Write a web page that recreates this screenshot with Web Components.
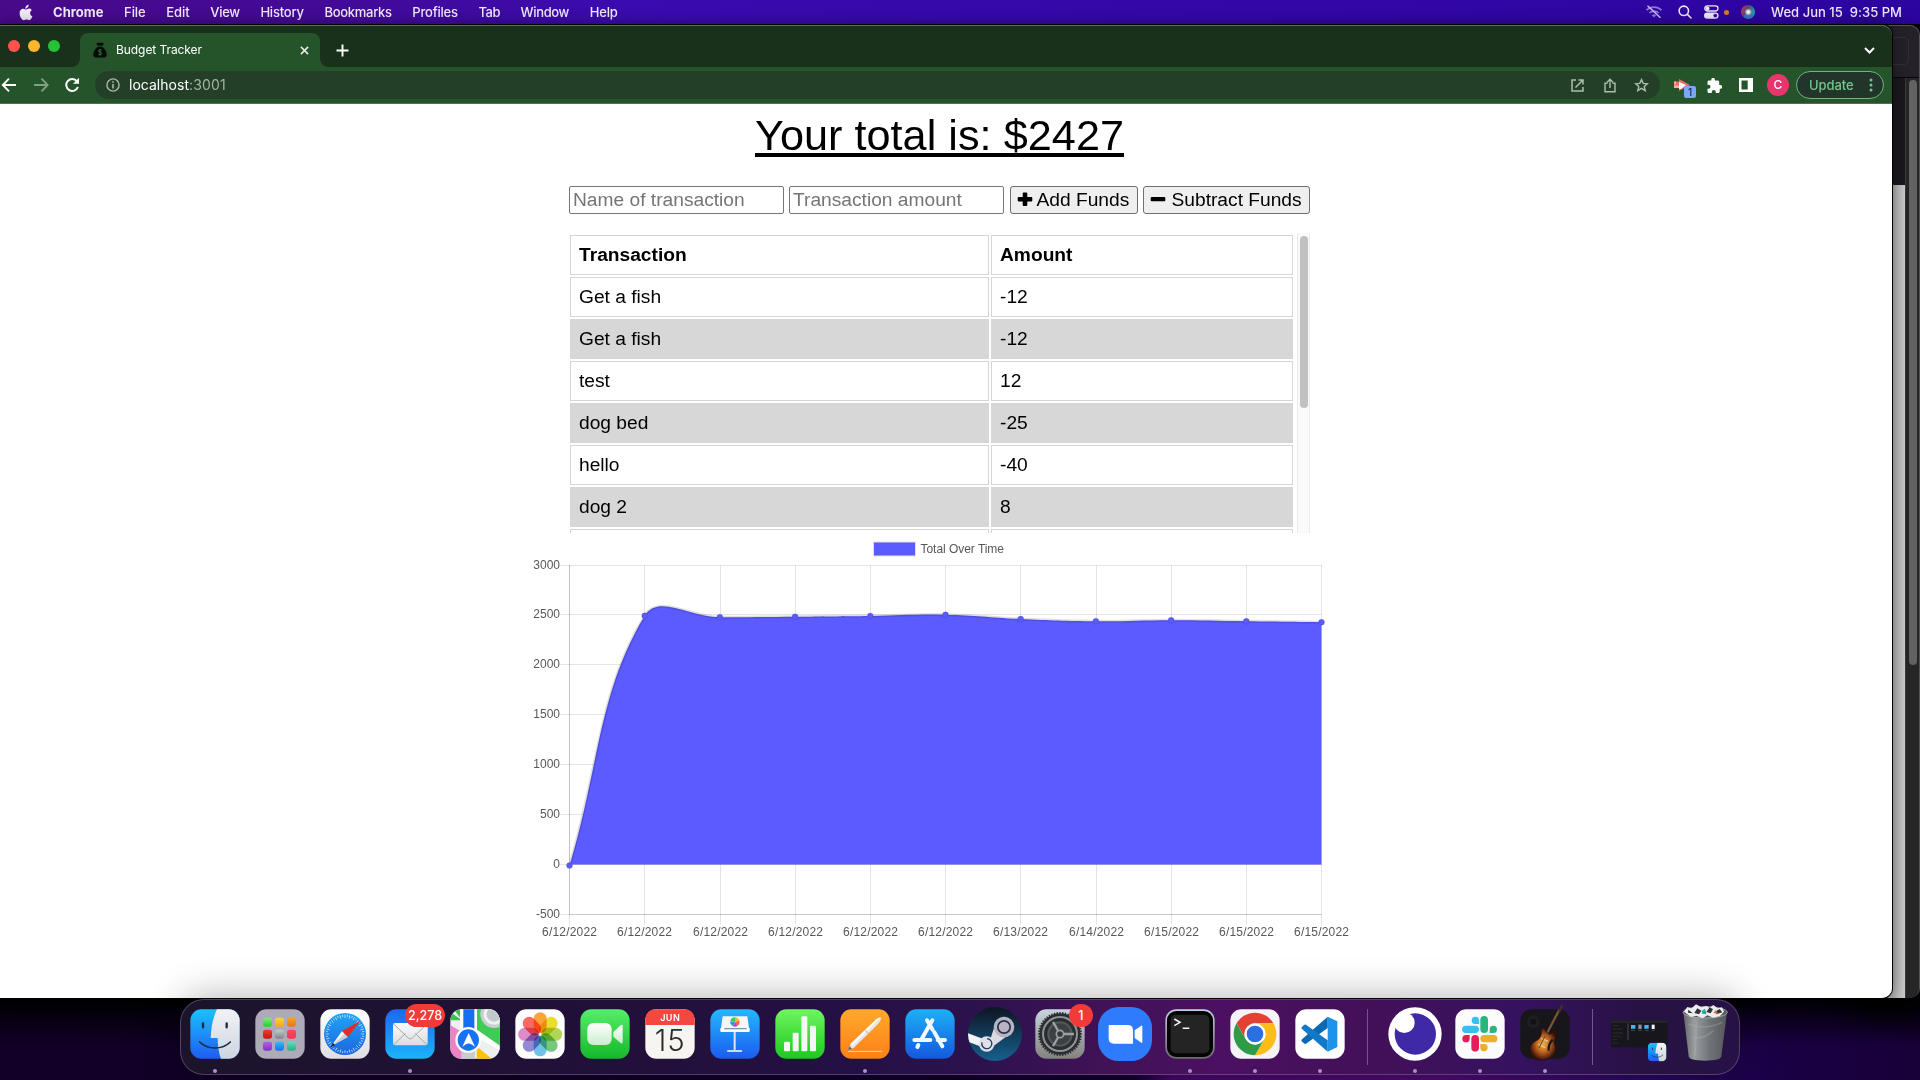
<!DOCTYPE html>
<html lang="en">
<head>
<meta charset="utf-8">
<title>Budget Tracker</title>
<style>
html,body{margin:0;padding:0;width:1920px;height:1080px;overflow:hidden;background:#0b0020}
</style>
</head>
<body>
<mac-desktop></mac-desktop>
<script>
function define(name, html, init) {
  customElements.define(name, class extends HTMLElement {
    constructor() {
      super();
      this.attachShadow({ mode: 'open' }).innerHTML = html;
    }
    connectedCallback() { if (init) init.call(this, this.shadowRoot); }
  });
}

/* Inline label whose tracking is adjusted so that it spans w pixels. */
define('fit-text', `<style>:host{display:inline-block;white-space:pre;flex:none}</style><slot></slot>`, function () {
  const w = parseFloat(this.getAttribute('w'));
  this.style.letterSpacing = '0px';
  const n = this.textContent.length;
  const now = this.getBoundingClientRect().width;
  if (w && n) this.style.letterSpacing = ((w - now) / n) + 'px';
});

/* ---------- menu bar ---------- */
define('menu-bar', `<style>
:host{display:flex;height:24px;align-items:center;color:#f1ebfa;font:500 13px Inter,sans-serif;background:linear-gradient(90deg,#490a8a 0,#420a98 18%,#3a0bb0 33%,#3408a8 60%,#2c04a0 100%);position:relative}
nav{display:flex;flex:1;align-items:center;padding-left:19px}
svg{display:block;flex:none}
b{font-weight:700}
fit-text{margin-top:-1px}
.apple{margin-right:20px}
nav fit-text{margin-right:20.6px}
aside{display:flex;align-items:center;padding-right:18px}
</style>
<nav>
<svg class="apple" width="14" height="17" viewBox="0 0 14 17"><path fill="#f1ebfa" d="M9.6.8c.1 1.200-.4 2.100-1 2.800-.6.700-1.500 1.200-2.300 1.100-.1-1.100.4-2.100 1-2.700C7.900 1.300 8.900.8 9.600.8zM12.800 6.200c-1.100.7-1.800 1.700-1.700 3 .1 1.500.9 2.600 2.300 3.100-.5 1.500-1.700 3.900-3.200 3.900-1 0-1.400-.6-2.600-.6s-1.700.6-2.600.6C3 16.200.6 12.600.6 9.200.6 6.400 2.300 4.700 4.200 4.700c1.200 0 2.100.8 2.900.8.800 0 1.900-.9 3.300-.9 1 0 1.900.6 2.400 1.600z"/></svg>
<fit-text w="50.500"><b>Chrome</b></fit-text><fit-text w="21.500">File</fit-text><fit-text w="23.500">Edit</fit-text><fit-text w="29.500">View</fit-text><fit-text w="43.500">History</fit-text><fit-text w="67.300">Bookmarks</fit-text><fit-text w="45.500">Profiles</fit-text><fit-text w="21.500">Tab</fit-text><fit-text w="48.500">Window</fit-text><fit-text w="28">Help</fit-text>
</nav>
<aside>
<svg width="18" height="14" viewBox="0 0 18 14" style="margin-right:15px"><g fill="none" stroke="#8f75d2" stroke-width="1.700"><path d="M1.500 5.200a10.600 10.600 0 0 1 15 0M4.300 8a6.800 6.800 0 0 1 9.400 0"/></g><path d="M6.700 10.300a3.300 3.300 0 0 1 4.600 0L9 12.600z" fill="#8f75d2"/><path d="M2.500.8l13 12" stroke="#cfc2f0" stroke-width="1.400"/></svg>
<svg width="14" height="14" viewBox="0 0 14 14" style="margin-right:12.500px"><g fill="none" stroke="#eee8fb" stroke-width="1.600" stroke-linecap="round"><circle cx="5.800" cy="5.800" r="4.700"/><path d="M9.400 9.400l3.600 3.600"/></g></svg>
<svg width="15" height="14" viewBox="0 0 15 14" style="margin-right:5px"><rect x=".8" y=".8" width="13.200" height="5.200" rx="2.600" fill="none" stroke="#eee8fb" stroke-width="1.300"/><circle cx="3.600" cy="3.400" r="1.900" fill="#eee8fb"/><rect y="7.400" width="14.600" height="6.400" rx="3.200" fill="#eee8fb"/><circle cx="11.300" cy="10.600" r="1.900" fill="#3510a5"/></svg>
<svg width="5" height="5" viewBox="0 0 5 5" style="margin-right:12px"><circle cx="2.500" cy="2.500" r="2.500" fill="#dc7a26"/></svg>
<svg width="14" height="14" viewBox="0 0 14 14" style="margin-right:16px"><defs><radialGradient id="sg"><stop offset="0" stop-color="#fff"/><stop offset=".35" stop-color="#fff" stop-opacity=".85"/><stop offset="1" stop-color="#fff" stop-opacity="0"/></radialGradient><linearGradient id="sl" x2="1" y2=".4"><stop offset="0" stop-color="#d33b77"/><stop offset=".45" stop-color="#5c4169"/><stop offset="1" stop-color="#1fa5a0"/></linearGradient></defs><circle cx="7" cy="7" r="7" fill="url(#sl)"/><path d="M2 11a7 7 0 0 0 11-1c-4-1-7-2-11 1z" fill="#3f6fd0"/><circle cx="7.200" cy="7" r="3.800" fill="url(#sg)"/></svg>
<fit-text w="131">Wed Jun 15  9:35 PM</fit-text>
</aside>`);

/* ---------- browser chrome ---------- */
define('tab-strip', `<style>
:host{display:flex;height:42px;background:#19311a;box-shadow:inset 0 1px #5c6e5d;border-radius:0 10px 0 0;align-items:center;color:#fff;font:400 12px Inter,sans-serif}
.lights{display:flex;gap:8px;width:80px;padding-left:8px;box-sizing:border-box}
.lights i{width:12px;height:12px;border-radius:50%}
.tab{align-self:flex-end;width:240px;height:34px;box-sizing:border-box;background:#26542a;border-radius:8px 8px 0 0;display:flex;align-items:center;padding:0 11px 0 13px;position:relative}
.tab:before,.tab:after{content:"";position:absolute;bottom:0;width:8px;height:8px}
.tab:before{left:-8px;background:radial-gradient(circle at 0 0,transparent 7.500px,#26542a 8px)}
.tab:after{right:-8px;background:radial-gradient(circle at 100% 0,transparent 7.500px,#26542a 8px)}
svg{display:block;flex:none}
.sp{flex:1}
</style>
<div class="lights"><i style="background:#ff544d"></i><i style="background:#ffb42a"></i><i style="background:#25c138"></i></div>
<div class="tab">
<svg width="14" height="16" viewBox="0 0 14 16" style="margin-right:9px;margin-top:-1px"><path d="M3.200 1.600L4.800 1 5.600.5 7 1l1.400-.5L10 1l1 .6-1.600 2.200H4.800zM4.700 4.700h4.700C12 7 13.700 10 13.700 12.500c0 2-1 3-2.700 3H3c-1.700 0-2.700-1-2.700-3C.3 10 2 7 4.700 4.700z" fill="#060b06"/><path d="M8.700 8.300C8.200 7.500 5.500 7.500 5.500 9c0 1.500 3.200.8 3.200 2.500 0 1.500-2.700 1.500-3.400.6M7 7v6.700" fill="none" stroke="#2c7a35" stroke-width=".9"/></svg>
<fit-text w="86" style="margin-top:-2px">Budget Tracker</fit-text><span class="sp"></span>
<svg width="9" height="9" viewBox="0 0 9 9"><path d="M.9.900l7.200 7.200M8.100.900L.9 8.100" stroke="#e8efe8" stroke-width="1.500"/></svg>
</div>
<svg width="13" height="13" viewBox="0 0 13 13" style="margin-left:16px;margin-top:8px"><path d="M6.500.5v12M.5 6.500h12" stroke="#fff" stroke-width="1.900"/></svg>
<span class="sp"></span>
<svg width="11" height="7" viewBox="0 0 11 7" style="margin:8px 17px 0 0"><path d="M1 1l4.500 4.500L10 1" fill="none" stroke="#fff" stroke-width="2"/></svg>`);

define('tool-bar', `<style>
:host{display:flex;height:37px;box-sizing:border-box;background:#26542a;border-bottom:1px solid #4c7350;align-items:center;font:400 14px Inter,sans-serif;padding-right:8px}
svg{display:block;flex:none}
.nav{display:flex;gap:16.500px;width:95px;box-sizing:border-box;padding-left:1px}
.omni{flex:1;height:28px;border-radius:14px;background:#233f27;display:flex;align-items:center;padding:0 11px 0 11px;color:#fff}
.omni fit-text{margin-top:-1px}
.omni .g{color:#a3b3a5;margin-right:auto}
.ext{display:flex;align-items:center;width:136px}
.badge{position:absolute;left:10px;top:7px;width:12px;height:12px;border-radius:2px;background:#7aa7f7;color:#1a2a40;font:500 10px/12px Inter,sans-serif;text-align:center}
.av{width:22px;height:22px;border-radius:50%;background:#e8356d;color:#fff;font:500 12px/22px Inter,sans-serif;text-align:center}
.up{width:88px;height:28px;border-radius:14px;box-sizing:border-box;border:1px solid #6db585;background:#23352a;color:#73c68c;display:flex;align-items:center;padding-left:12px;font:500 13px Inter,sans-serif}
</style>
<div class="nav">
<svg width="16" height="16" viewBox="0 0 16 16"><path d="M15 8H2M8 1.700L1.800 8 8 14.300" fill="none" stroke="#fff" stroke-width="1.900"/></svg>
<svg width="16" height="16" viewBox="0 0 16 16"><path d="M0 8h13M7.500 1.700L13.700 8l-6.200 6.300" fill="none" stroke="#82a085" stroke-width="1.800"/></svg>
<svg width="15" height="16" viewBox="0 0 15 16" style="margin-left:-1px"><path d="M11.900 4.100A6 6 0 1 0 12.900 10" fill="none" stroke="#fff" stroke-width="2"/><path d="M14 .8v6H8z" fill="#fff"/></svg>
</div>
<div class="omni">
<svg width="14" height="14" viewBox="0 0 14 14" style="margin-right:9px"><circle cx="7" cy="7" r="6.100" fill="none" stroke="#a9b8ac" stroke-width="1.400"/><path d="M7 6v4.500M7 3.300v1.500" stroke="#a9b8ac" stroke-width="1.600"/></svg>
<fit-text w="60">localhost</fit-text><fit-text class="g" w="37">:3001</fit-text>
<svg width="13" height="13" viewBox="0 0 13 13"><path d="M5 1H1v11h11V8M7.500 1H12v4.500M12 1L4.500 8.500" fill="none" stroke="#aebdb0" stroke-width="1.500"/></svg>
<svg width="12" height="15" viewBox="0 0 12 15" style="margin-left:20px"><path d="M3.500 5.200H1v8.600h10V5.200H8.500M6 10V1.500M3 4.300l3-3 3 3" fill="none" stroke="#aebdb0" stroke-width="1.400"/></svg>
<svg width="15" height="14" viewBox="0 0 15 14" style="margin-left:18px"><path d="M7.500 1.600l1.700 3.800 4.200.4-3.200 2.700 1 4.100-3.700-2.200-3.700 2.200 1-4.100L1.600 5.800l4.200-.4z" fill="none" stroke="#aebdb0" stroke-width="1.400"/></svg>
</div>
<div class="ext">
<div style="position:relative;width:16px;height:12px;margin-left:14px"><svg width="16" height="12" viewBox="0 0 16 12"><path d="M0 2.500h5V0l11 6-11 6V9H0z" fill="#ee6a66"/><path d="M0 2.500h2v3H0zM0 6.500h5v2.500H0z" fill="#ffaaa6"/><path d="M5 3l7 3-5 4H5z" fill="#fff"/></svg><span class="badge">1</span></div>
<svg width="15" height="15" viewBox="0 0 15 15" style="margin-left:16.500px"><path d="M12.600 7.100h-.9V4c0-.9-.6-1.500-1.500-1.500H7.400v-.8a1.800 1.800 0 0 0-3.600 0v.8H1.500C.7 2.500 0 3.200 0 4v2.800h1a2 2 0 0 1 0 4H0v2.700C0 14.400.6 15 1.500 15h2.800v-1a2 2 0 0 1 4 0v1h2.400c.9 0 1.500-.6 1.500-1.500v-2.800h.9a1.800 1.800 0 0 0-.5-3.600z" fill="#fff" transform="translate(.5)"/></svg>
<svg width="14" height="14" viewBox="0 0 14 14" style="margin-left:17.500px"><path fill-rule="evenodd" d="M0 0h14v14H0zM2.500 2.500v9H8.700v-9z" fill="#fff"/></svg>
<div class="av" style="margin-left:14px">C</div>
</div>
<div class="up"><fit-text w="44.500">Update</fit-text><svg width="4" height="14" viewBox="0 0 4 14" style="margin-left:15px"><g fill="#73c68c"><circle cx="2" cy="2" r="1.500"/><circle cx="2" cy="7" r="1.500"/><circle cx="2" cy="12" r="1.500"/></g></svg></div>`);

/* ---------- page ---------- */
define('fund-button', `<style>
:host{display:flex;box-sizing:border-box;height:28px;border:1px solid #6f6f6f;border-radius:3px;background:#efefef;align-items:center;padding-left:6px;font:19.200px "Liberation Sans",Arial,sans-serif;color:#000;white-space:nowrap}
svg{display:block;flex:none}</style>
<svg width="16" height="15" viewBox="0 0 16 15" style="margin-top:-1px"><path fill="#000"/></svg><slot></slot>`, function (r) {
  r.querySelector('path').setAttribute('d', this.hasAttribute('plus')
    ? 'M6.700.5h2.600q1 0 1 1V5h4q1 0 1 1v2.500q0 1-1 1h-4v3.600q0 1-1 1H6.700q-1 0-1-1V9.500H1.700q-1 0-1-1V6q0-1 1-1h4V1.500q0-1 1-1z'
    : 'M1.700 5h12.600q1 0 1 1v2.300q0 1-1 1H1.700q-1 0-1-1V6q0-1 1-1z');
});

define('txn-table', `<style>
:host{display:flex;width:740px;height:300px;overflow:hidden;font:19.200px "Liberation Sans",Arial,sans-serif;color:#000}
.rows{display:flex;flex-direction:column;gap:2px;width:723px;padding-top:2px;flex:none}
.r{display:grid;grid-template-columns:419px 302px;gap:2px;height:40px;flex:none}
.r div{box-sizing:border-box;border:1px solid #d6d6d6;padding-left:8px;line-height:38px}
.r.h{font-weight:bold}
.r.g div{background:#d7d7d7}
.track{margin-left:3.500px;width:13.500px;box-sizing:border-box;border:solid #ebebeb;border-width:0 1px;background:#fafafa;padding:3px 0 0 2.500px}
.thumb{width:8px;height:172px;border-radius:4px;background:#c1c1c1}
</style><div class="rows"></div><div class="track"><div class="thumb"></div></div>`, function (r) {
  const rows = [['Transaction', 'Amount'], ['Get a fish', '-12'], ['Get a fish', '-12'], ['test', '12'], ['dog bed', '-25'], ['hello', '-40'], ['dog 2', '8'], ['', '']];
  r.querySelector('.rows').innerHTML = rows.map((a, i) =>
    `<div class="r ${i ? (i % 2 ? '' : 'g') : 'h'}"><div>${a[0]}</div><div>${a[1]}</div></div>`).join('');
});

define('total-chart', `<style>:host{display:block;width:880px;height:430px}svg{display:block;font:12px "Liberation Sans",Arial,sans-serif}</style>
<svg width="880" height="430" viewBox="500 530 880 430"></svg>`, function (r) {
  const L = 569.500, R = 1321.500, T = 565, B = 914.500, Z = 864.400, k = 349.300 / 3500, dx = (R - L) / 10;
  const dates = ['12', '12', '12', '12', '12', '12', '13', '14', '15', '15', '15'];
  const v = [-12, 2492, 2476, 2482, 2490, 2502, 2459, 2436, 2447, 2437, 2427];
  const p = v.map((y, i) => ({ x: L + dx * i, y: Z - y * k }));
  let s = '';
  for (let i = 0; i < 8; i++) {
    const y = Math.floor(565 + i * 49.9) + .5;
    s += `<path d="M559.500 ${y}H${R}" stroke="#000" stroke-opacity=".1"/><text x="560" y="${y + 3.5}" text-anchor="end" fill="#585858">${3000 - i * 500}</text>`;
    if (i > 5) s += `<path d="M569.500 ${y}H${R}" stroke="#000" stroke-opacity=".12"/>`;
  }
  for (let i = 0; i < 11; i++) {
    const x = Math.floor(569.7 + 75.2 * i) + .5;
    s += `<path d="M${x} ${T}V924.500" stroke="#000" stroke-opacity=".1"/><text x="${x}" y="936" text-anchor="middle" textLength="55" fill="#585858">6/${dates[i]}/2022</text>`;
  }
  s += `<path d="M569.500 565V914.500" stroke="#000" stroke-opacity=".15"/>`;
  /* cubic spline with tension .4, control points kept inside the plot */
  const c = p.map((q, i) => {
    const a = p[i - 1] || q, n = p[i + 1] || q;
    const d0 = Math.hypot(q.x - a.x, q.y - a.y), d1 = Math.hypot(n.x - q.x, n.y - q.y);
    const f0 = .4 * d0 / (d0 + d1), f1 = .4 * d1 / (d0 + d1);
    const cl = y => Math.max(T, Math.min(B, y));
    return { px: q.x - f0 * (n.x - a.x), py: cl(q.y - f0 * (n.y - a.y)), nx: q.x + f1 * (n.x - a.x), ny: cl(q.y + f1 * (n.y - a.y)) };
  });
  let d = `M${p[0].x} ${p[0].y}`;
  for (let i = 1; i < 11; i++) d += `C${c[i - 1].nx} ${c[i - 1].ny} ${c[i].px} ${c[i].py} ${p[i].x} ${p[i].y}`;
  s += `<path d="${d}V${Z}H${L}Z" fill="#5b5bff"/><path d="${d}" fill="none" stroke="#000" stroke-opacity=".12" stroke-width="3"/>`;
  s += p.map(q => `<circle cx="${q.x}" cy="${q.y}" r="3" fill="#5b5bff" stroke="#000" stroke-opacity=".1"/>`).join('');
  s += `<rect x="874" y="542.500" width="41" height="13" fill="none" stroke="#000" stroke-opacity=".12" stroke-width="2"/><rect x="874" y="542.500" width="41" height="13" fill="#5b5bff"/><text x="920.500" y="552.500" textLength="83.500" fill="#585858">Total Over Time</text>`;
  r.querySelector('svg').innerHTML = s;
});

define('budget-page', `<style>
:host{display:flex;flex-direction:column;align-items:center;height:894px;background:#fff;padding-right:12px;box-sizing:border-box;color:#000;font-family:"Liberation Sans",Arial,sans-serif;border-radius:0 0 10px 0;overflow:hidden}
h1{margin:0 1px 0 0;font-weight:400;font-size:43.200px;height:82px;line-height:63px}
h1 fit-text{text-decoration:underline;text-decoration-thickness:4px;text-underline-offset:3px}
form{display:flex;width:742px;margin:0 0 19px}
input{box-sizing:border-box;width:215px;height:28px;margin:0 5px 0 0;border:1px solid #767676;border-radius:2px;padding:1px 3px;font:19.200px "Liberation Sans",Arial,sans-serif;background:#fff}
input::placeholder{color:#757575;opacity:1}
</style>
<h1><fit-text w="369">Your total is: $2427</fit-text></h1>
<form><input placeholder="Name of transaction"><input placeholder="Transaction amount" style="margin-right:6px"><fund-button plus style="width:128px;margin-right:5px"><span style="margin-left:3.500px">Add Funds</span></fund-button><fund-button style="width:167px"><span style="margin-left:5.500px">Subtract Funds</span></fund-button></form>
<txn-table></txn-table>
<total-chart style="margin-top:-3px"></total-chart>`);

define('chrome-window', `<style>:host{display:block;width:1892px;height:973px;border-radius:0 10px 10px 0;box-shadow:0 0 0 1px #000,0 0 16px rgba(0,0,0,.45)}</style>
<tab-strip></tab-strip><tool-bar></tool-bar><budget-page></budget-page>`);

define('back-window', `<style>
:host{display:flex;flex-direction:column;width:60px;height:973px;background:#242129;border-radius:0 10px 10px 0;overflow:hidden;box-shadow:0 0 0 1px #000,0 14px 22px 4px rgba(0,0,0,.8);border:solid #55525c;border-width:1px 1px 0 0;box-sizing:border-box}
.top{height:52px;border-bottom:1px solid #08070b;box-sizing:border-box}
.top i{display:block;margin:11px 10px 0 20px;height:28px;border:1px solid #322f38;border-radius:5px;box-sizing:border-box}
.body{display:flex;flex:1}
.c{width:45px;display:flex;flex-direction:column}
.c .d{height:107px;background:#1a171f}
.c .l{flex:1;background:linear-gradient(90deg,#aaa 32px,#b8b8b8 36px,#cbcbcb 45px)}
.s{width:14px;background:#262626;border-left:1px solid #3a3a3a;box-sizing:border-box;padding:2px 0 0 3px}
.s i{display:block;width:8px;height:585px;border-radius:4px;background:#626262}
</style><div class="top"><i></i></div><div class="body"><div class="c"><div class="d"></div><div class="l"></div></div><div class="s"><i></i></div></div>`);

/* ---------- dock ---------- */
define('dock-icon', `<style>
:host{display:block;width:50px;height:50px;flex:none;position:relative}
::slotted(svg){display:block;width:50px;height:50px;overflow:visible}
.dot{display:none;position:absolute;left:22.500px;top:59.500px;width:4px;height:4px;border-radius:50%;background:#ab8fc9}
:host([on]) .dot{display:block}
.b{position:absolute;box-sizing:border-box;left:20px;top:-5.500px;height:23.500px;min-width:23.500px;border-radius:12px;background:#f23b38;color:#fff;font:500 12.500px/23.500px Inter,sans-serif;text-align:center;padding:0 3px}
:host(:not([badge])) .b{display:none}
:host([one]) .b{left:34px}
</style><slot></slot><i class="dot"></i><span class="b"></span>`, function (r) { r.querySelector('.b').textContent = this.getAttribute('badge') || ''; });

const box = f => `<rect x="1" y="1" width="148" height="148" rx="33" fill="${f}"/>`;
const svg = s => `<svg viewBox="0 0 150 150">${s}</svg>`;
const grad = (id, a, b) => `<linearGradient id="${id}" x2="0" y2="1"><stop stop-color="${a}"/><stop offset="1" stop-color="${b}"/></linearGradient>`;
const face = p => `<defs>${grad(p + 'A', '#1ac2fd', '#1e5cf2')}${grad(p + 'B', '#f2f3f5', '#ccd5e0')}<clipPath id="${p}C"><rect x="1" y="1" width="148" height="148" rx="33"/></clipPath></defs><g clip-path="url(#${p}C)"><rect width="150" height="150" fill="url(#${p}A)"/><path d="M81 0C68 28 63 58 62 87h21c0 22 3 44 10 63h60V0z" fill="url(#${p}B)"/></g><path d="M39 43v12M110 43v12" stroke="#222a3c" stroke-width="7" stroke-linecap="round"/><path d="M29 99c24 24 68 24 92 0" fill="none" stroke="#222a3c" stroke-width="5" stroke-linecap="round"/>`;

const launch = [['#7ff07a', '#2cc92b'], ['#ffd23c', '#fba411'], ['#fba02b', '#ee7316'], ['#f43a33', '#c5160f'], ['#c3ced5', '#7e8488'], ['#ff4767', '#f4364f'], ['#b45ee8', '#8132c6'], ['#20c3fc', '#1f6ff0'], ['#5de0c2', '#20b282']].map((c, i) =>
  `<defs>${grad('l' + i, c[0], c[1])}</defs><rect x="${24 + i % 3 * 36}" y="${26 + (i / 3 | 0) * 36}" width="27" height="27" rx="7" fill="url(#l${i})"/>`).join('');

let ticks = '';
for (let i = 0; i < 48; i++) ticks += `<path d="M75 17v${i % 2 ? 6 : 10}" transform="rotate(${i * 7.5} 75 75)" stroke="#e9f5ff" stroke-width="2"/>`;
const petals = ['#fb9417', '#e8d80b', '#a3cf3b', '#5fbd6b', '#58b7e2', '#8277cd', '#d67ac0', '#fb5148'].map((c, i) =>
  `<rect x="56" y="10" width="39" height="62" rx="19.500" fill="${c}" opacity=".86" style="mix-blend-mode:multiply" transform="rotate(${i * 45} 75.500 76)"/>`).join('');
let teeth = '';
for (let i = 0; i < 48; i++) teeth += `<path d="M75 9v9" transform="rotate(${i * 7.5} 75 75)" stroke="#2a2c2e" stroke-width="4"/>`;

const icons = [
  ['on', svg(face('finder'))],
  ['', svg(box('#aeabb9') + launch)],
  ['', svg(`<defs>${grad('sa', '#20a5f4', '#1b66df')}${grad('sw', '#ffffff', '#dfdfe2')}</defs>` + box('url(#sw)') + `<circle cx="75" cy="75" r="63" fill="url(#sa)"/>${ticks}<path d="M121 36L66 66l17 18z" fill="#f4372f"/><path d="M34 111l32-45 17 18z" fill="#f2f4f7"/><path d="M66 66l17 18 38-48z" fill="#c9251f" opacity=".5"/><path d="M34 111l40-36 9 9z" fill="#c9ccd3"/><path d="M31 116l8-14 6 6z" fill="#14223a"/>`)],
  ['on badge="2,278"', svg(`<defs>${grad('ma', '#1e66f1', '#1ab4fb')}${grad('mb', '#fbfbfb', '#d9dcdf')}</defs>` + box('url(#ma)') + `<rect x="24" y="42" width="104" height="67" rx="7" fill="url(#mb)"/><path d="M26 45l44 42q6 5 12 0l44-42M27 106l35-33M125 106L90 73" fill="none" stroke="#a5a7aa" stroke-width="3"/>`)],
  ['', svg(`<defs><clipPath id="mc"><rect x="1" y="1" width="148" height="148" rx="33"/></clipPath></defs><g clip-path="url(#mc)"><rect width="150" height="150" fill="#eef0ef"/><path d="M0 8l36 26H0zM10 0h25v32z" fill="#38c351"/><path d="M75 0h75v112L75 62z" fill="#3fcb57"/><circle cx="132" cy="16" r="41" fill="#c9ced2"/><circle cx="132" cy="16" r="31" fill="#f0f1f2"/><circle cx="132" cy="16" r="22" fill="#c3c8cc"/><path d="M0 48l35 20v82H0z" fill="#eb83c4"/><path d="M30 0l10 0v58H30zM73 0h8v66h-8z" fill="#fff"/><rect x="40" width="33" height="66" fill="#1470f1"/><path d="M78 60l72 50v14L78 84z" fill="#fff"/><path d="M35 90h40v60H35z" fill="#c9cbcf"/><path d="M80 112l46 38H80z" fill="#fbc10d"/></g><circle cx="55" cy="93" r="39" fill="#f8fbff"/><circle cx="55" cy="93" r="32" fill="#1772f2"/><path d="M56 72l19 41q-10-8-19-10-9 2-19 10z" fill="#fff"/>`)],
  ['', svg(box('#fdfdfd') + `<g style="isolation:isolate">${petals}</g><circle cx="75.500" cy="76" r="3" fill="#fff"/>`)],
  ['', svg(`<defs>${grad('va', '#55ef69', '#15b82b')}${grad('vb', '#ffffff', '#c8efcd')}</defs>` + box('url(#va)') + `<rect x="22" y="42" width="73" height="66" rx="18" fill="url(#vb)"/><path d="M100 69l22-20q6-4 6 3v47q0 7-6 3l-22-19z" fill="url(#vb)"/>`)],
  ['', svg(box('#f7f5f1') + `<path d="M1 48V34Q1 1 34 1h82q33 0 33 33v14z" fill="#f4473f"/><text x="75" y="36" text-anchor="middle" textLength="59" font-family="Inter" font-weight="600" font-size="27" fill="#fff">JUN</text><text x="74" y="125" text-anchor="middle" textLength="90" font-family="Inter" font-weight="300" font-size="88" fill="#2b2b2b">15</text>`)],
  ['', svg(`<defs>${grad('ka', '#22b9fd', '#1b5bf0')}</defs>` + box('url(#ka)') + `<path d="M38 22h74l6 42H32z" fill="#f4f7fa"/><path d="M31 58h88v8q0 3-3 3H34q-3 0-3-3z" fill="#fff"/><path d="M44 57h66v4H41z" fill="#6f93b5"/><path d="M75 39V25a14 14 0 0 1 13 10z" fill="#fbb42c"/><path d="M75 39l13-4a14 14 0 0 1-5 15z" fill="#f4673e"/><path d="M75 39l8 11a14 14 0 0 1-15 1z" fill="#ae4bc0"/><path d="M75 39l-7 12a14 14 0 0 1-7-14z" fill="#2696e5"/><path d="M75 39l-14-3a14 14 0 0 1 14-11z" fill="#42c362"/><path d="M74 69v57" stroke="#dbe6f2" stroke-width="6"/><rect x="51" y="123" width="46" height="6" rx="3" fill="#c8daf1"/>`)],
  ['', svg(`<defs>${grad('na', '#6ef65f', '#1dc81f')}</defs>` + box('url(#na)') + `<g fill="#f3f8f3"><rect x="27" y="98" width="18" height="29" rx="3"/><rect x="53" y="71" width="18" height="56" rx="3"/><rect x="79" y="22" width="18" height="105" rx="3"/><rect x="105" y="50" width="18" height="77" rx="3"/></g>`)],
  ['on', svg(`<defs>${grad('pa', '#ffa92b', '#ff8018')}</defs>` + box('url(#pa)') + `<path d="M24 127h102" stroke="#ffd2a5" stroke-width="3"/><path d="M24 124l8-20L109 31q14-10 14-3 0 6-8 16L41 117z" fill="#e4e6e9"/><path d="M32 104L109 31q9-6 12-4L37 110z" fill="#fff"/><path d="M75 62l9 11M24 124l5-12 6 7z" stroke="#8d8f94" stroke-width="2" fill="#555"/>`)],
  ['', svg(`<defs>${grad('aa', '#1cb0f6', '#1458dd')}</defs>` + box('url(#aa)') + `<g stroke="#f3f8ff" stroke-width="12" stroke-linecap="round"><path d="M82 34L50 90M66 34l17 28M88 70l24 42M28 93h48M98 93h22M40 108l-3 6"/></g>`)],
  ['', svg(`<defs>${grad('ta', '#0d1522', '#17608f')}<clipPath id="tc"><circle cx="75" cy="75" r="81"/></clipPath></defs><circle cx="75" cy="75" r="81" fill="url(#ta)"/><g clip-path="url(#tc)"><path d="M-12 82L54 105 64 82 74 50 112 80 70 112Z" fill="#dcd9e3"/><path d="M-10 84l54 20" stroke="#f4f2f6" stroke-width="24"/><circle cx="50" cy="105" r="23" fill="#e2dfe8"/><path d="M36 100a15 15 0 1 0 15-11" fill="none" stroke="#173b61" stroke-width="4"/></g><circle cx="102" cy="54" r="31" fill="#b9b4c4"/><circle cx="102" cy="54" r="21" fill="#253148"/><circle cx="102" cy="54" r="16" fill="#b9b4c4"/>`)],
  ['one badge="1"', svg(`<defs>${grad('gs', '#c8d5dd', '#83827e')}</defs>` + box('url(#gs)') + `${teeth}<circle cx="75" cy="75" r="58" fill="#8f9495" stroke="#2b2d30" stroke-width="8"/><circle cx="75" cy="75" r="43" fill="#55595b" stroke="#2b2d30" stroke-width="10"/><circle cx="75" cy="75" r="32" fill="#3c4042"/><path d="M75 75h42M75 75L54 38.600M75 75l-21 36.400" stroke="#9ba0a2" stroke-width="7"/><circle cx="75" cy="75" r="11" fill="#353839" stroke="#9ba0a2" stroke-width="5"/>`)],
  ['', svg(`<rect x="-6" y="-6" width="162" height="162" rx="62" fill="#2e7cfd"/><path d="M26 48h57q16 0 16 16v40H42q-16 0-16-16z" fill="#fff"/><path d="M104 64l20-14q3-2 3 1v49q0 3-3 1l-20-14z" fill="#fff"/>`)],
  ['on', svg(`<defs>${grad('ra', '#c3d2dc', '#6d6b70')}</defs>` + box('url(#ra)') + `<rect x="6" y="6" width="138" height="138" rx="27" fill="#050505"/><rect x="17" y="17" width="116" height="116" rx="15" fill="#242424"/><path d="M28 30l17 10-17 10M53 58h20" fill="none" stroke="#f5f5f5" stroke-width="4.500"/>`)],
  ['on', svg(box('#f5f3f7') + `<circle cx="75" cy="75" r="64" fill="#fff"/><path d="M19.600 43A64 64 0 0 1 130.400 43H75A32 32 0 0 0 47.300 91z" fill="#e34133"/><path d="M130.400 43A64 64 0 0 1 75 139L102.700 91A32 32 0 0 0 75 43z" fill="#fdbd18"/><path d="M19.600 43A64 64 0 0 0 75 139L102.700 91A32 32 0 0 1 47.300 91z" fill="#2f9b49"/><circle cx="75" cy="75" r="31" fill="#fff"/><circle cx="75" cy="75" r="25" fill="#2b6fe3"/>`)],
  ['on', svg(box('#fff') + `<path d="M98 23L127 37V114L98 128z" fill="#1f93ea"/><path d="M98 23v34L33 104q-3 2-6-1l-6-5q-4-4 0-7z" fill="#0b68b2"/><path d="M98 128V94L33 47q-3-2-6 1l-6 5q-4 4 0 7z" fill="#107ac8"/>`)],
  ['|'],
  ['on', svg(`<circle cx="75" cy="75" r="80" fill="#fff"/><circle cx="76" cy="75" r="62" fill="#4029a6"/><circle cx="43" cy="41" r="31" fill="#fff"/>`)],
  ['on', svg(box('#fbfbfb') + `<g><rect x="76" y="21" width="23" height="51" rx="11.500" fill="#2bb57d"/><path d="M104 72V60a11 11 0 1 1 11 12z" fill="#2bb57d"/><rect x="76" y="78" width="51" height="22" rx="11" fill="#ecaf2c"/><path d="M76 105h12a11 11 0 1 1-12 11z" fill="#ecaf2c"/><rect x="49" y="78" width="23" height="50" rx="11.500" fill="#e01f5c"/><path d="M44 78v11a11 11 0 1 1-11-11z" fill="#e01f5c"/><rect x="21" y="50" width="51" height="22" rx="11" fill="#35c1ef"/><path d="M72 45H60a11 11 0 1 1 12-11z" fill="#35c1ef"/></g>`)],
  ['on', svg(`<defs><radialGradient id="gu"><stop offset="0" stop-color="#edb540"/><stop offset=".5" stop-color="#c0641f"/><stop offset="1" stop-color="#35100a"/></radialGradient></defs>` + box('#17161a') + `<circle cx="40" cy="38" r="19" fill="#1f1e22"/><circle cx="40" cy="38" r="9" fill="#131216"/><path d="M73 88L118 2" stroke="#7d5436" stroke-width="7"/><path d="M115 10l5-18 10-6-2 10-8 17z" fill="#3d2f28"/><path d="M64 68q0-13 8-12 5 12 14 19 8 3 14-9 6-10 9 0 5 16-6 27-3 5 2 15 9 28-16 40-28 12-48 0-19-16-10-36 5-12 20-18 13-8 13-26z" fill="url(#gu)" stroke="#24100a" stroke-width="2"/><path d="M64 88l20 9M55 106l21 10" stroke="#d9c9a4" stroke-width="4"/><path d="M98 92q-14 14-12 33" fill="none" stroke="#1f1513" stroke-width="7"/><path d="M75 81L57 117" stroke="#63432c" stroke-width="3"/>`)],
  ['|'],
  ['', svg(`<rect x="-12" y="34" width="170" height="81" fill="#17161d"/><path d="M-12 34h170v8H-12z" fill="#25232c"/><path d="M-8 50h20M-8 60h30M-8 72h32M-8 82h26M-8 92h14M-8 102h18" stroke="#25242b" stroke-width="4"/><path d="M39 43v50" stroke="#625f68" stroke-width="2"/><path d="M48 48h13v11H48zM88 48h13v11H88z" fill="#3bbcf2"/><path d="M70 47h10v13H70z" fill="#8497aa"/><path d="M110 47h9v13h-9z" fill="#f4f4f4"/><path d="M48 64h12M69 64h12M89 64h12M110 64h9" stroke="#625f68" stroke-width="2"/><g transform="translate(98 101) scale(.375)">${face('mini')}</g>`)],
  ['', svg(`<defs><linearGradient id="tr"><stop stop-color="#62666a"/><stop offset=".25" stop-color="#9a9da0"/><stop offset=".6" stop-color="#707377"/><stop offset="1" stop-color="#54575c"/></linearGradient></defs><path d="M10 10L26 142q2 13 49 13t49-13L141 10z" fill="url(#tr)"/><ellipse cx="75.500" cy="10" rx="66" ry="17" fill="#55575c" stroke="#a3a6aa" stroke-width="3"/><path d="M12 8l10-14 13 4 13-12 16 9 15-4 10 5 11-8 13 10 13-3 6 13-12 13-20 5-18-7-14 9-19-8-16 4z" fill="#eceded"/><path d="M52-2l12 7-7 11-14-4zM79 9l10-14 10 6-7 12zM25 2l13 11-14-2zM105 8l14-8 8 10-18 6z" fill="#303237"/><path d="M65 6l10-7 4 12-12 4z" fill="#29b592"/><path d="M100 11l8-8 6 12z" fill="#d97141"/><path d="M66 13l12-3v6z" fill="#3383d4"/><path d="M25 45q50 20 102-5M40 85q30 8 60-20M45 140l5-100" fill="none" stroke="#b9bcbf" stroke-opacity=".28" stroke-width="5"/>`)]
];

define('app-dock', `<style>
:host{display:flex;box-sizing:border-box;width:1560px;height:76px;border:1px solid rgba(150,125,170,.42);border-radius:24px;gap:15px;padding:9px 0 0 9px;background:linear-gradient(90deg,#1c142b 0,#211039 28%,#241044 43%,#2c124d 51%,#421257 60%,#4b1062 67%,#431058 76%,#35125f 86%,#271243 94%,#261245 100%);box-shadow:0 -2px 38px rgba(0,0,0,.3)}
i{width:1px;height:56px;background:#76558c;margin:0 7px;flex:none}
</style>${icons.map(a => a[0] === '|' ? '<i></i>' : `<dock-icon ${a[0]}>${a[1]}</dock-icon>`).join('')}`);

define('mac-desktop', `<style>
:host{display:block;position:relative;width:1920px;height:1080px;overflow:hidden;background:#0b0020}
.wall{position:absolute;left:0;right:0;top:998px;height:82px;background:linear-gradient(#000 0,rgba(0,0,0,.75) 12px,rgba(0,0,0,0) 50px),linear-gradient(90deg,#130029 0,#0e0022 25%,#10002b 59%,#420866 61%,#4d0a6e 75%,#26075c 86%,#190044 93%,#180038 100%)}
.strip{position:absolute;left:0;top:24px;width:1920px;height:2px;background:#000}
back-window{position:absolute;left:1860px;top:25px}
chrome-window{position:absolute;left:0;top:25px}
app-dock{position:absolute;left:180px;top:999px}
</style>
<menu-bar></menu-bar><div class="wall"></div><div class="strip"></div><back-window></back-window><chrome-window></chrome-window><app-dock></app-dock>`);
</script>
</body>
</html>
